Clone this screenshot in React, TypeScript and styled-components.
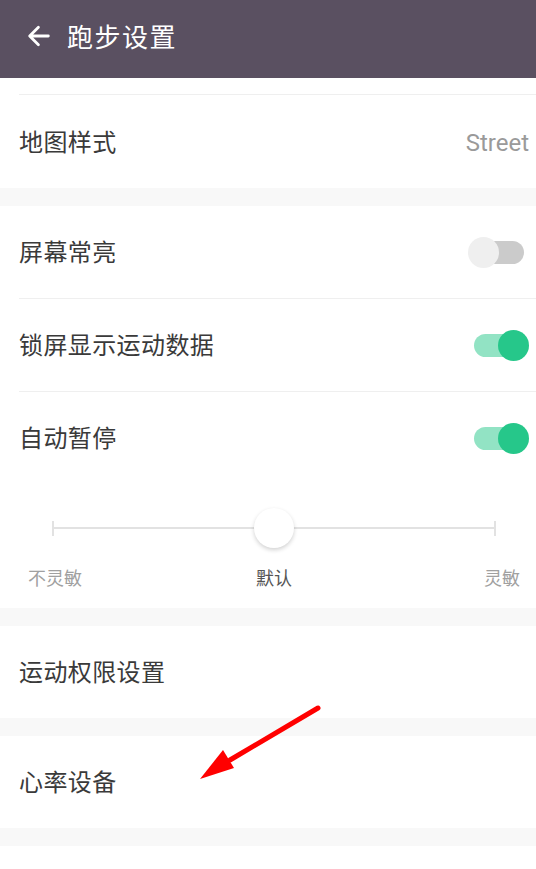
import * as React from "react";
import styled, { createGlobalStyle } from "styled-components";

const GlobalStyle = createGlobalStyle`
  html, body {
    margin: 0;
    padding: 0;
    background: #f8f8f8;
  }
  body {
    font-family: "Noto Sans CJK SC", "Noto Sans", sans-serif;
    overflow: hidden;
  }
`;

const Page = styled.div`
  width: 536px;
  height: 869px;
  position: relative;
  overflow: hidden;
  background: #f8f8f8;
`;

const Header = styled.div`
  height: 78px;
  background: #5a5061;
  display: flex;
  align-items: center;
  padding-left: 25px;
  padding-bottom: 6px;
  box-sizing: border-box;
`;

const HeaderTitle = styled.h1`
  margin: 0 0 2px 14px;
  font-size: 26px;
  font-weight: 400;
  color: #ffffff;
  letter-spacing: 1.5px;
`;

const Group = styled.div`
  background: #ffffff;
  margin-bottom: 18px;
`;

const Row = styled.div<{ $height: number; $divider?: boolean }>`
  height: ${p => p.$height}px;
  margin-left: 19px;
  padding-right: 7px;
  padding-bottom: 3px;
  display: flex;
  align-items: center;
  justify-content: space-between;
  border-bottom: ${p => (p.$divider ? "1px solid #efefef" : "none")};
  box-sizing: border-box;
`;

const Spacer = styled.div`
  height: 17px;
  margin-left: 19px;
  border-bottom: 1px solid #efefef;
  box-sizing: border-box;
`;

const Label = styled.span`
  font-size: 24px;
  letter-spacing: 0.4px;
  color: #3a3a3a;
`;

const Value = styled.span`
  font-size: 24px;
  padding-top: 6px;
  color: #9a9a9a;
  font-family: Roboto, "Noto Sans", sans-serif;
`;

const Switch = styled.div<{ $on: boolean }>`
  position: relative;
  width: 56px;
  height: 31px;
  margin-top: 3px;
  margin-right: ${p => (p.$on ? "0" : "5px")};
`;

const Track = styled.div<{ $on: boolean }>`
  position: absolute;
  left: ${p => (p.$on ? "1px" : "6px")};
  right: ${p => (p.$on ? "5px" : "0")};
  top: 4px;
  height: 23px;
  border-radius: 12px;
  background: ${p => (p.$on ? "#92e3c4" : "#cbcbcb")};
`;

const Knob = styled.div<{ $on: boolean }>`
  position: absolute;
  top: 0;
  ${p => (p.$on ? "right: 0;" : "left: 0;")}
  width: 31px;
  height: 31px;
  border-radius: 50%;
  background: ${p => (p.$on ? "#26c78a" : "#efefef")};
`;

const SliderBox = styled.div`
  padding: 24px 16px 18px 28px;
`;

const SliderArea = styled.div`
  position: relative;
  height: 40px;
  margin: 0 24px;
`;

const SliderLine = styled.div`
  position: absolute;
  left: 0;
  right: 0;
  top: 19px;
  height: 2px;
  background: #e2e2e2;
`;

const SliderTick = styled.div<{ $side: "left" | "right" }>`
  position: absolute;
  ${p => p.$side}: 0;
  top: 13px;
  width: 2px;
  height: 15px;
  background: #e2e2e2;
`;

const SliderThumb = styled.div`
  position: absolute;
  left: 50%;
  top: 0;
  margin-left: -20px;
  width: 40px;
  height: 40px;
  border-radius: 50%;
  background: #ffffff;
  box-shadow: 0 2px 4px rgba(0, 0, 0, 0.18);
`;

const SliderLabels = styled.div`
  display: grid;
  grid-template-columns: 1fr auto 1fr;
  align-items: center;
  margin-top: 16px;
`;

const SliderLabel = styled.span<{ $active?: boolean; $align: string }>`
  font-size: 18px;
  justify-self: ${p => p.$align};
  color: ${p => (p.$active ? "#555555" : "#a0a0a0")};
`;

const ArrowSvg = styled.svg`
  position: absolute;
  left: 190px;
  top: 700px;
`;

const Toggle = ({ on }: { on: boolean }) => (
  <Switch $on={on}>
    <Track $on={on} />
    <Knob $on={on} />
  </Switch>
);

export default function App() {
  return (
    <Page>
      <GlobalStyle />
      <Header>
        <svg width="28" height="28" viewBox="0 0 24 24" fill="none">
          <path
            d="M20 12H4.5M11.5 4.5L4 12l7.5 7.5"
            stroke="#ffffff"
            strokeWidth="2.4"
            strokeLinecap="round"
            strokeLinejoin="round"
          />
        </svg>
        <HeaderTitle>跑步设置</HeaderTitle>
      </Header>

      <Group>
        <Spacer />
        <Row $height={93}>
          <Label>地图样式</Label>
          <Value>Street</Value>
        </Row>
      </Group>

      <Group>
        <Row $height={93} $divider>
          <Label>屏幕常亮</Label>
          <Toggle on={false} />
        </Row>
        <Row $height={93} $divider>
          <Label>锁屏显示运动数据</Label>
          <Toggle on={true} />
        </Row>
        <Row $height={92}>
          <Label>自动暂停</Label>
          <Toggle on={true} />
        </Row>
        <SliderBox>
          <SliderArea>
            <SliderLine />
            <SliderTick $side="left" />
            <SliderTick $side="right" />
            <SliderThumb />
          </SliderArea>
          <SliderLabels>
            <SliderLabel $align="start">不灵敏</SliderLabel>
            <SliderLabel $align="center" $active>
              默认
            </SliderLabel>
            <SliderLabel $align="end">灵敏</SliderLabel>
          </SliderLabels>
        </SliderBox>
      </Group>

      <Group>
        <Row $height={92}>
          <Label>运动权限设置</Label>
        </Row>
      </Group>

      <Group>
        <Row $height={92}>
          <Label>心率设备</Label>
        </Row>
      </Group>

      <Group>
        <Row $height={40} />
      </Group>

      <ArrowSvg width="140" height="90" viewBox="0 0 140 90">
        <path d="M128 8L40 60" stroke="#ff0000" strokeWidth="5" strokeLinecap="round" />
        <polygon points="10,79 33,50 44,68" fill="#ff0000" />
      </ArrowSvg>
    </Page>
  );
}
